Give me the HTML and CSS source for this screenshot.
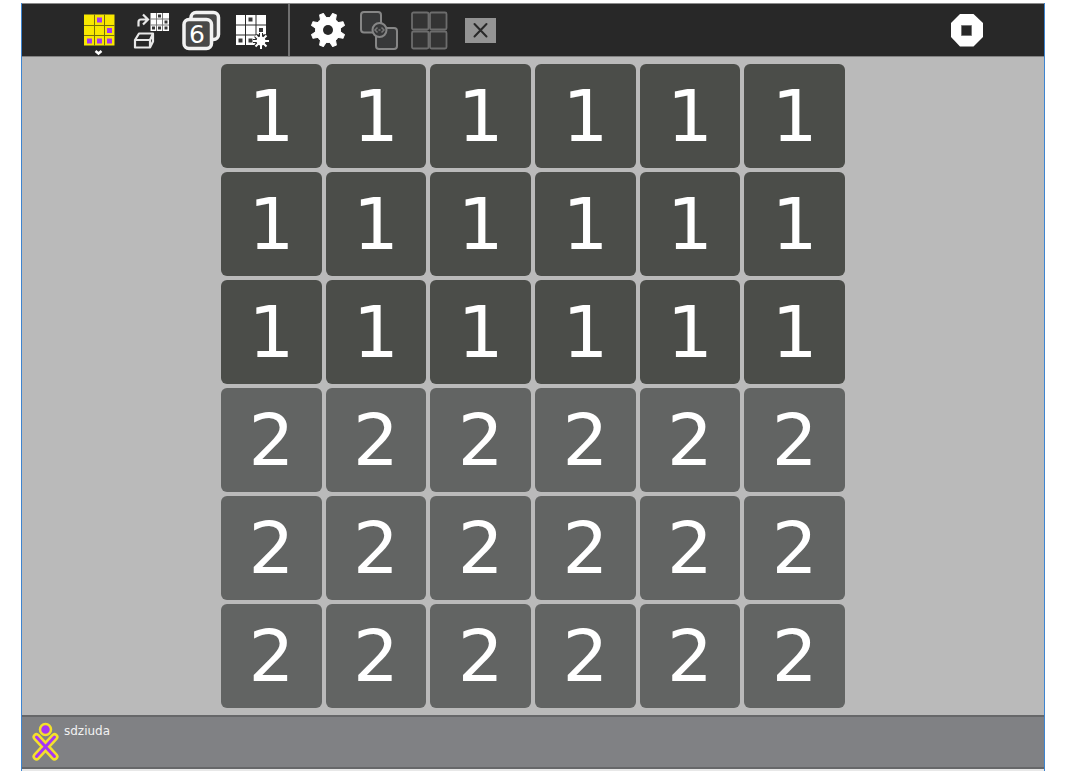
FILE: index.html
```html
<!DOCTYPE html>
<html lang="en">
<head>
<meta charset="utf-8">
<title>Number tiles</title>
<link rel="stylesheet" href="styles.css">
</head>
<body>
<div class="window">
  <header class="toolbar">
    <button class="tool" aria-label="Game">
      <svg viewBox="0 0 51 52"><path fill="#f8e800" d="M10 10.500h30.500v31H10z"/><path stroke="#77700c" fill="none" d="M20.500 10.500v31M30.500 10.500v31M10 21.500h30.500M10 31.500h30.500"/><path fill="#a535f5" d="M23 13.500h5v5h-5zM33 24h5v5h-5zM13 34.500h5v5h-5zM23 34.500h5v5h-5zM33 34.500h5v5h-5z"/><path d="M21.500 47l3 2.500 3-2.500" fill="none" stroke="#fff" stroke-width="2.500"/></svg>
    </button>
    <button class="tool" aria-label="New game from box">
      <svg viewBox="0 0 51 52"><path fill="#fff" d="M25.500 9H44v18H25.500z"/><path stroke="#777" fill="none" d="M31.500 9v18M37.500 9v18M25.500 15h18.500M25.500 21h18.500"/><path fill="#383838" d="M33 10.500h3v3h-3zM39.500 16.500h3v3h-3zM27 22.500h3v3h-3zM33 22.500h3v3h-3zM39.500 22.500h3v3h-3z"/><path d="M13.500 22.500V18q0-2.500 2.500-2.500h6M18 10.500l5 5-5 5" fill="none" stroke="#e8e8e8" stroke-width="2.200"/><path d="M10 36l4-6.500h14L25 36zM10 36v7.500h15V36M25 43.500l3-6v-8" fill="none" stroke="#e8e8e8" stroke-width="2.200" stroke-linejoin="round"/></svg>
    </button>
    <button class="tool" aria-label="Number game 6">
      <svg viewBox="0 0 51 52"><rect x="15" y="8.500" width="27.500" height="27" rx="5" fill="#484848" stroke="#f2f2f2" stroke-width="3.500"/><rect x="8" y="15.500" width="27.500" height="29" rx="5" fill="#484848" stroke="#f2f2f2" stroke-width="3.500"/><text class="card-digit" x="21" y="39" text-anchor="middle">6</text></svg>
    </button>
    <button class="tool" aria-label="Create custom game">
      <svg viewBox="0 0 51 52"><path fill="#fff" d="M9 11h9v9.500H9zM19 11h9.500v9.500H19zM29.500 11H39v9.500h-9.500zM9 21.500h9v9H9zM19 21.500h9.500v9H19zM29.500 21.500H39v9h-9.500zM9 31.500h9V41H9zM19 31.500h9.500V41H19z"/><path fill="#383838" d="M21.500 13.500h4v4h-4zM32 24h4v4h-4zM11.500 34.500h4v4h-4zM21.500 34.500h4v4h-4z"/><path d="M34 29v16M26 37h16M28.500 31.500l11 11M39.500 31.500l-11 11" stroke="#282828" stroke-width="4"/><path d="M34 29v16M26 37h16M28.500 31.500l11 11M39.500 31.500l-11 11" stroke="#fff" stroke-width="2"/><circle cx="34" cy="37" r="4.500" fill="#fff"/></svg>
    </button>
    <span class="separator"></span>
    <button class="tool" aria-label="Settings">
      <svg viewBox="0 0 51 52"><g transform="translate(26 26)" fill="#fff"><circle r="13"/><path id="tooth" stroke="#fff" stroke-linejoin="round" d="M-3.500-10l1.500-7h4l1.500 7zM-3.500 10l1.500 7h4l1.500-7z" transform="rotate(22.500)"/><use href="#tooth" transform="rotate(45)"/><use href="#tooth" transform="rotate(90)"/><use href="#tooth" transform="rotate(135)"/><circle r="5" fill="#282828"/></g></svg>
    </button>
    <button class="tool" aria-label="Grouped tiles" disabled>
      <svg viewBox="0 0 51 52"><g fill="#373839" stroke="#868686" stroke-width="2"><rect x="8" y="8" width="20" height="20.500" rx="3"/><rect x="23" y="24" width="21" height="21" rx="3"/><circle cx="26.500" cy="26" r="7"/></g><path d="M24.500 23.500L22 26l2.500 2.500M28.500 23.500L31 26l-2.500 2.500M25.500 26h2" fill="none" stroke="#777" stroke-width="1.500"/></svg>
    </button>
    <button class="tool" aria-label="Tile grid" disabled>
      <svg viewBox="0 0 51 52"><g fill="#343434" stroke="#6c6c6c" stroke-width="1.800"><rect x="8" y="8.500" width="16.500" height="17" rx="1.500"/><rect x="26" y="8.500" width="16.500" height="17" rx="1.500"/><rect x="8" y="27.500" width="16.500" height="17" rx="1.500"/><rect x="26" y="27.500" width="16.500" height="17" rx="1.500"/></g></svg>
    </button>
    <button class="tool" aria-label="Clear" disabled>
      <svg viewBox="0 0 51 52"><path fill="#949494" d="M10 14h31v25H10z"/><path d="M19.500 20l12 12.500M31.500 20l-12 12.500" stroke="#282828" stroke-width="2" stroke-linecap="round"/></svg>
    </button>
    <button class="tool stop" aria-label="Stop">
      <svg viewBox="0 0 51 52"><path fill="#fff" d="M19 10h13.500l9.500 9v14l-9.500 9.500H19L10 33V19z"/><path fill="#282828" stroke="#777" d="M20.500 21.500h10v10h-10z"/></svg>
    </button>
  </header>
  <main class="area">
    <div class="board">
      <button class="tile one">1</button><button class="tile one">1</button><button class="tile one">1</button><button class="tile one">1</button><button class="tile one">1</button><button class="tile one">1</button>
      <button class="tile one">1</button><button class="tile one">1</button><button class="tile one">1</button><button class="tile one">1</button><button class="tile one">1</button><button class="tile one">1</button>
      <button class="tile one">1</button><button class="tile one">1</button><button class="tile one">1</button><button class="tile one">1</button><button class="tile one">1</button><button class="tile one">1</button>
      <button class="tile two">2</button><button class="tile two">2</button><button class="tile two">2</button><button class="tile two">2</button><button class="tile two">2</button><button class="tile two">2</button>
      <button class="tile two">2</button><button class="tile two">2</button><button class="tile two">2</button><button class="tile two">2</button><button class="tile two">2</button><button class="tile two">2</button>
      <button class="tile two">2</button><button class="tile two">2</button><button class="tile two">2</button><button class="tile two">2</button><button class="tile two">2</button><button class="tile two">2</button>
    </div>
  </main>
  <footer class="players">
    <svg class="buddy" viewBox="0 0 28 40"><g fill="none" stroke-linecap="round"><path d="M5.500 15l18 19.500M23.500 15l-18 19.500" stroke="#f3e02c" stroke-width="8"/><path d="M5.500 15l18 19.500M23.500 15l-18 19.500" stroke="#a535f5" stroke-width="3"/></g><circle cx="14.500" cy="7.500" r="5.500" fill="#a535f5" stroke="#f3e02c" stroke-width="2.500"/></svg>
    <span class="player-name">sdziuda</span>
  </footer>
</div>
</body>
</html>
```

FILE: styles.css
```css
* {
  box-sizing: border-box;
}

body {
  margin: 0;
  padding: 3px 21px;
  background: #fff;
  font-family: "DejaVu Sans", sans-serif;
}

.window {
  display: flex;
  flex-direction: column;
  min-height: calc(100vh - 6px);
  border: solid #3d84d0;
  border-width: 0 1px;
  padding-bottom: 2px;
  background: #e8e8e8;
}

.toolbar {
  display: flex;
  align-items: center;
  padding: 0 52px;
  background: #282828;
  border-top: 1px solid #8a8a8a;
  border-bottom: 1px solid #828282;
}

.tool {
  flex: none;
  width: 51px;
  height: 52px;
  padding: 0;
  border: 0;
  background: none;
}

.tool svg {
  display: block;
  width: 51px;
  height: 52px;
}

.card-digit {
  font-family: "DejaVu Sans", sans-serif;
  font-size: 25px;
  fill: #fff;
}

.separator {
  width: 2px;
  height: 52px;
  margin: 0 12px 0 10px;
  background: #707070;
}

.stop {
  margin-left: auto;
}

.area {
  display: flex;
  flex: 1;
  justify-content: center;
  padding: 7px;
  background: #bababa;
}

.board {
  display: grid;
  grid-template-columns: repeat(6, 1fr);
  grid-auto-rows: 1fr;
  gap: 4px;
  width: 100%;
  max-width: 624px;
}

.tile {
  display: flex;
  align-items: center;
  justify-content: center;
  min-width: 0;
  padding: 0;
  border: 0;
  border-radius: 6px;
  color: #fff;
  font-family: inherit;
  font-size: 72px;
}

.one {
  background: #4b4d49;
}

.two {
  background: #626463;
}

.players {
  display: flex;
  align-items: flex-start;
  gap: 5px;
  height: 54px;
  padding: 5px 9px;
  background: #808184;
  border: solid #666769;
  border-width: 2px 0;
}

.buddy {
  width: 28px;
  height: 40px;
}

.player-name {
  color: #f2f2f2;
  font-size: 12px;
  line-height: 18px;
}
```
